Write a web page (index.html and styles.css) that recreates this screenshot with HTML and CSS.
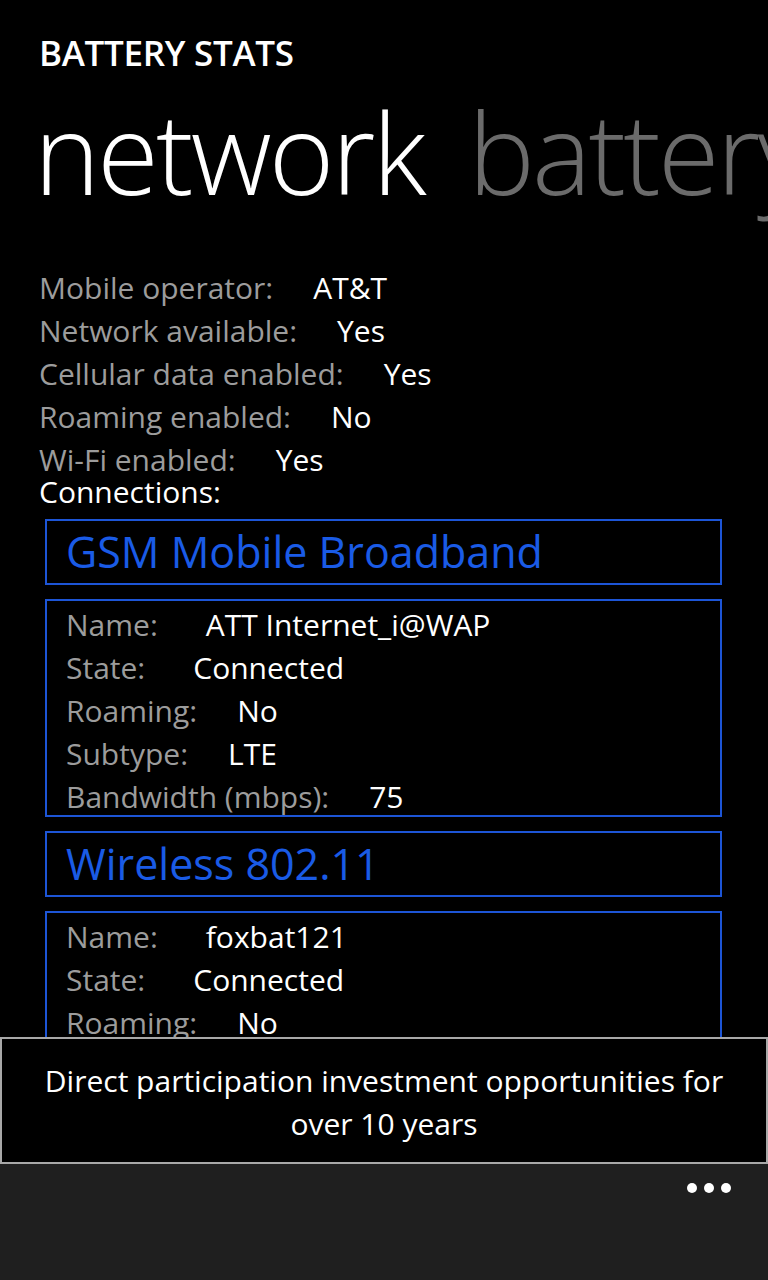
FILE: index.html
```html
<!DOCTYPE html>
<html>
<head>
<meta charset="utf-8">
<link rel="stylesheet" href="styles.css">
</head>
<body>
<div class="screen">
  <div class="app-title">BATTERY STATS</div>
  <div class="pivot">
    <span class="pivot-item active">network</span>
    <span class="pivot-item">battery</span>
  </div>
  <div class="content">
    <div class="row"><span class="label">Mobile operator:</span><span class="value">AT&amp;T</span></div>
    <div class="row"><span class="label">Network available:</span><span class="value">Yes</span></div>
    <div class="row"><span class="label">Cellular data enabled:</span><span class="value">Yes</span></div>
    <div class="row"><span class="label">Roaming enabled:</span><span class="value">No</span></div>
    <div class="row"><span class="label">Wi-Fi enabled:</span><span class="value">Yes</span></div>
    <div class="section-label">Connections:</div>
    <div class="conn-list">
      <div class="conn-title">GSM Mobile Broadband</div>
      <div class="conn-details">
        <div class="row"><span class="label">Name:</span><span class="value wide">ATT Internet_i@WAP</span></div>
        <div class="row"><span class="label">State:</span><span class="value wide">Connected</span></div>
        <div class="row"><span class="label">Roaming:</span><span class="value">No</span></div>
        <div class="row"><span class="label">Subtype:</span><span class="value">LTE</span></div>
        <div class="row"><span class="label">Bandwidth (mbps):</span><span class="value">75</span></div>
      </div>
      <div class="conn-title">Wireless 802.11</div>
      <div class="conn-details">
        <div class="row"><span class="label">Name:</span><span class="value wide">foxbat121</span></div>
        <div class="row"><span class="label">State:</span><span class="value wide">Connected</span></div>
        <div class="row"><span class="label">Roaming:</span><span class="value">No</span></div>
        <div class="row"><span class="label">Subtype:</span><span class="value">None</span></div>
        <div class="row"><span class="label">Bandwidth (mbps):</span><span class="value">72</span></div>
      </div>
    </div>
  </div>
  <div class="ad-banner">Direct participation investment opportunities for over 10 years</div>
  <div class="app-bar">
    <div class="more"><span class="dot"></span><span class="dot"></span><span class="dot"></span></div>
  </div>
</div>
</body>
</html>
```
FILE: styles.css
```css
html, body {
  margin: 0;
  padding: 0;
  background: #000;
}
.screen {
  position: relative;
  width: 768px;
  height: 1280px;
  overflow: hidden;
  background: #000;
  color: #fff;
  font-family: "Open Sans", "Noto Sans", sans-serif;
}
.app-title {
  padding: 33px 0 0 39px;
  font-size: 35px;
  font-weight: 600;
  line-height: 40px;
  letter-spacing: -0.3px;
}
.pivot {
  white-space: nowrap;
  padding-left: 34px;
  margin-top: 14px;
  font-size: 112px;
  font-weight: 300;
  line-height: 130px;
  letter-spacing: -2.8px;
}
.pivot-item {
  color: #6b6b6b;
  margin-right: 18px;
}
.pivot-item.active {
  color: #fff;
}
.content {
  padding: 49px 46px 0 39px;
  font-size: 30px;
}
.row {
  display: flex;
  gap: 40px;
  line-height: 43px;
  white-space: nowrap;
}
.label {
  color: #9c9c9c;
}
.value {
  color: #fff;
}
.value.wide {
  margin-left: 8px;
}
.section-label {
  line-height: 32px;
  margin-top: -5px;
}
.conn-list {
  display: flex;
  flex-direction: column;
  gap: 14px;
  margin: 11px 0 0 6px;
}
.conn-title {
  border: 2px solid #1d55d6;
  color: #1a5be6;
  font-size: 43px;
  line-height: 62px;
  padding-left: 19px;
}
.conn-details {
  border: 2px solid #1d55d6;
  padding: 2px 0 0 19px;
  height: 212px;
}
.ad-banner {
  position: absolute;
  left: 0;
  top: 1037px;
  height: 120px;
  width: 690px;
  padding: 3px 37px 0;
  border: 2px solid #a8a8a8;
  background: #000;
  color: #fff;
  font-size: 30px;
  line-height: 43px;
  text-align: center;
  display: flex;
  align-items: center;
  justify-content: center;
}
.app-bar {
  position: absolute;
  left: 0;
  top: 1164px;
  width: 768px;
  height: 116px;
  background: #1f1f1f;
  display: flex;
  justify-content: flex-end;
  align-items: flex-start;
}
.more {
  display: flex;
  gap: 7px;
  margin: 19px 37px 0 0;
}
.dot {
  width: 10px;
  height: 10px;
  border-radius: 50%;
  background: #fff;
}
```
